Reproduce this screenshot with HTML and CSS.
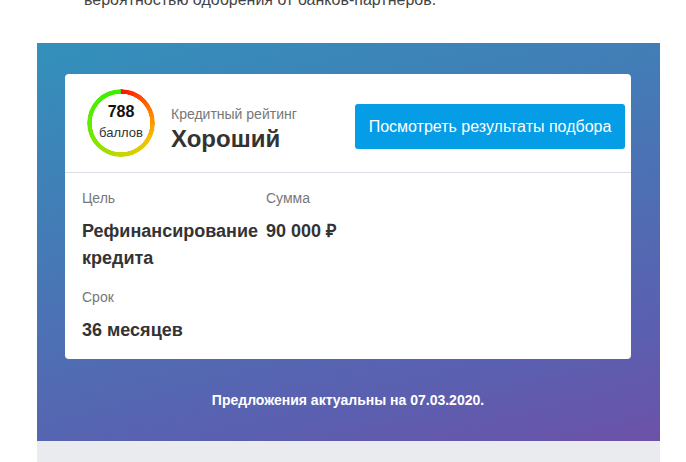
FILE: index.html
```html
<!DOCTYPE html>
<html lang="ru">
<head>
<meta charset="utf-8">
<title>Результаты подбора</title>
<link rel="stylesheet" href="styles.css">
</head>
<body>
<div class="page">
  <div class="intro"><p>вероятностью одобрения от банков-партнеров.</p></div>
  <section class="banner">
    <div class="card">
      <div class="card-head">
        <div class="gauge">
          <div class="gauge-ring"></div>
          <div class="gauge-num">788</div>
          <div class="gauge-unit">баллов</div>
        </div>
        <div class="rating">
          <div class="rating-label">Кредитный рейтинг</div>
          <div class="rating-value">Хороший</div>
        </div>
        <a class="cta">Посмотреть результаты подбора</a>
      </div>
      <div class="card-body">
        <div class="fields">
          <div class="field field-goal">
            <div class="field-label">Цель</div>
            <div class="field-value">Рефинансирование кредита</div>
          </div>
          <div class="field">
            <div class="field-label">Сумма</div>
            <div class="field-value">90 000 ₽</div>
          </div>
        </div>
        <div class="field field-term">
          <div class="field-label">Срок</div>
          <div class="field-value">36 месяцев</div>
        </div>
      </div>
    </div>
    <p class="note">Предложения актуальны на 07.03.2020.</p>
  </section>
  <div class="footer"></div>
</div>
</body>
</html>
```
FILE: styles.css
```css
html, body { margin: 0; padding: 0; height: 100%; overflow: hidden; background: #fff; }
body { font-family: "Liberation Sans", Arial, sans-serif; color: #333; }
.page { width: 623px; margin-left: 37px; }
.intro { height: 43px; overflow: hidden; padding-left: 47px; color: #444; }
.intro p { margin: -9px 0 0; font-size: 16px; line-height: 18px; }
.banner {
  height: 398px; box-sizing: border-box; padding: 31px 29px 0 28px;
  background: linear-gradient(165deg, #3291bb 0%, #5a60b0 78%, #6c52a9 100%);
}
.card { height: 285px; background: #fff; border-radius: 4px; }
.card-head {
  height: 99px; box-sizing: border-box; display: flex; align-items: flex-start;
  padding: 15px 6px 0 22px; border-bottom: 1px solid #dcdce4;
}
.gauge { position: relative; width: 68px; height: 68px; flex: none; text-align: center; color: #111; }
.gauge-ring {
  position: absolute; inset: 0; border-radius: 50%;
  background: conic-gradient(#ff1000 0deg, #ff8000 70deg, #f5c000 120deg, #c4d800 180deg, #70e800 250deg, #3cf000 340deg, #3cf000 359deg, #ff1000 360deg);
  -webkit-mask: radial-gradient(circle closest-side, transparent 29px, #000 29.5px);
  mask: radial-gradient(circle closest-side, transparent 29px, #000 29.5px);
}
.gauge-num { padding-top: 14px; font-size: 16px; font-weight: 700; line-height: 18px; }
.gauge-unit { margin-top: 4px; font-size: 13px; line-height: 16px; color: #333; }
.rating { margin-left: 16px; width: 184px; flex: none; padding-top: 17px; }
.rating-label { font-size: 14px; line-height: 16px; color: #777; }
.rating-value { margin-top: 3px; font-size: 24px; font-weight: 700; line-height: 28px; color: #333; }
.cta {
  width: 270px; height: 45px; flex: none; margin-top: 15px; display: flex; align-items: center; justify-content: center;
  background: #049de6; color: #fff; font-size: 16px; border-radius: 3px;
}
.card-body { padding: 16px 17px 0; }
.fields { display: flex; }
.field-goal { width: 184px; flex: none; }
.field-label { font-size: 14px; line-height: 18px; color: #777; }
.field-value { margin-top: 11px; font-size: 18px; font-weight: 700; line-height: 27px; color: #333; }
.field-term { margin-top: 16px; }
.note { margin: 33px 0 0; text-align: center; color: #fff; font-size: 14px; font-weight: 700; line-height: 16px; }
.footer { height: 21px; background: #eaebef; }
```
